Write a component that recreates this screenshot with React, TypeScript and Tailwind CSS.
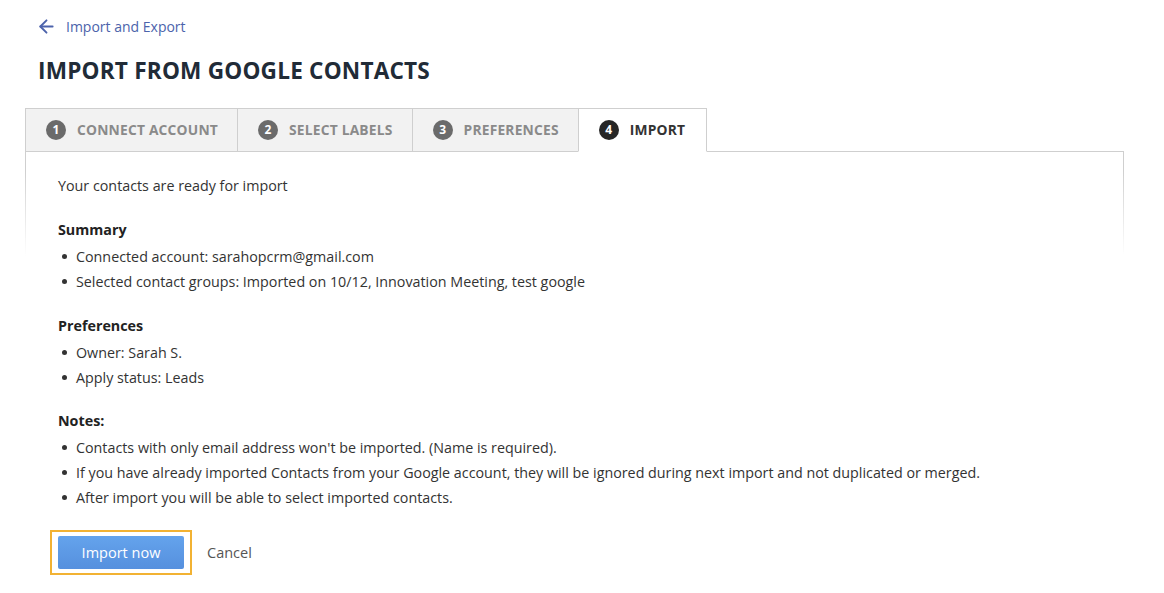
import { ArrowLeft } from "lucide-react";

const tabs = [
  { n: 1, label: "Connect account" },
  { n: 2, label: "Select labels" },
  { n: 3, label: "Preferences" },
  { n: 4, label: "Import", active: true },
];

function Section({ title, items, top }: { title: string; items: string[]; top: string }) {
  return (
    <div className={top}>
      <div className="font-bold text-[#222] leading-[20px]">{title}</div>
      <ul className="mt-[4px]">
        {items.map((item) => (
          <li key={item} className="flex items-center h-[25px]">
            <span className="w-[5px] h-[5px] rounded-full bg-[#333] ml-[4px] mr-[9px]" />
            {item}
          </li>
        ))}
      </ul>
    </div>
  );
}

export default function App() {
  return (
    <div className="min-h-[593px] bg-white font-['Open_Sans',sans-serif] text-[14.3px] text-[#333] pt-[15px]">
      <a className="flex items-center gap-[9px] ml-[36px] h-[22px] text-[#4c63ab] text-[14px]">
        <ArrowLeft size={21} strokeWidth={2.2} />
        <span>Import and Export</span>
      </a>
      <h1 className="ml-[38px] mt-[21px] text-[22.6px] font-bold tracking-[0.2px] text-[#212b37] leading-[26px]">
        IMPORT FROM GOOGLE CONTACTS
      </h1>

      <div className="ml-[25px] w-[1099px] mt-[24px]">
        <div className="flex relative z-10">
          {tabs.map((t) => (
            <div
              key={t.n}
              className={
                t.active
                  ? "flex items-center h-[44px] pl-[20px] pr-[21px] border border-[#cfcfcf] border-b-white bg-white -ml-px"
                  : "flex items-center h-[44px] pl-[20px] pr-[19px] border border-[#cfcfcf] bg-[#f2f2f2] -ml-px first:ml-0"
              }
            >
              <span
                className={
                  t.active
                    ? "w-[20px] h-[20px] rounded-full bg-[#262626] text-white text-[12px] font-bold flex items-center justify-center mr-[11px]"
                    : "w-[20px] h-[20px] rounded-full bg-[#6b6b6b] text-white text-[12px] font-bold flex items-center justify-center mr-[11px]"
                }
              >
                {t.n}
              </span>
              <span
                className={
                  t.active
                    ? "uppercase font-bold text-[13.8px] text-[#333] tracking-[0.2px]"
                    : "uppercase font-bold text-[13.8px] text-[#8a8a8a] tracking-[0.2px]"
                }
              >
                {t.label}
              </span>
            </div>
          ))}
        </div>
        <div className="-mt-px bg-[linear-gradient(to_bottom,#cfcfcf,#cfcfcf_20px,rgba(207,207,207,0)_105px)] px-px pt-px">
          <div className="bg-white pl-[32px] pt-[24px] pb-[22px]">
            <div className="leading-[20px]">Your contacts are ready for import</div>
            <Section
              top="mt-[24px]"
              title="Summary"
              items={[
                "Connected account: sarahopcrm@gmail.com",
                "Selected contact groups: Imported on 10/12, Innovation Meeting, test google",
              ]}
            />
            <Section top="mt-[22px]" title="Preferences" items={["Owner: Sarah S.", "Apply status: Leads"]} />
            <Section
              top="mt-[21px]"
              title="Notes:"
              items={[
                "Contacts with only email address won't be imported. (Name is required).",
                "If you have already imported Contacts from your Google account, they will be ignored during next import and not duplicated or merged.",
                "After import you will be able to select imported contacts.",
              ]}
            />
            <div className="flex items-center mt-[20px] -ml-[8px]">
              <div className="border-2 border-[#f2b233] px-[6px] py-[4px]">
                <button className="block w-[126px] h-[33px] rounded-[2px] bg-[linear-gradient(#64a3ec,#5690de)] text-white text-[14.5px]">
                  Import now
                </button>
              </div>
              <span className="ml-[15px] text-[#555] text-[14.5px]">Cancel</span>
            </div>
          </div>
        </div>
      </div>
    </div>
  );
}
